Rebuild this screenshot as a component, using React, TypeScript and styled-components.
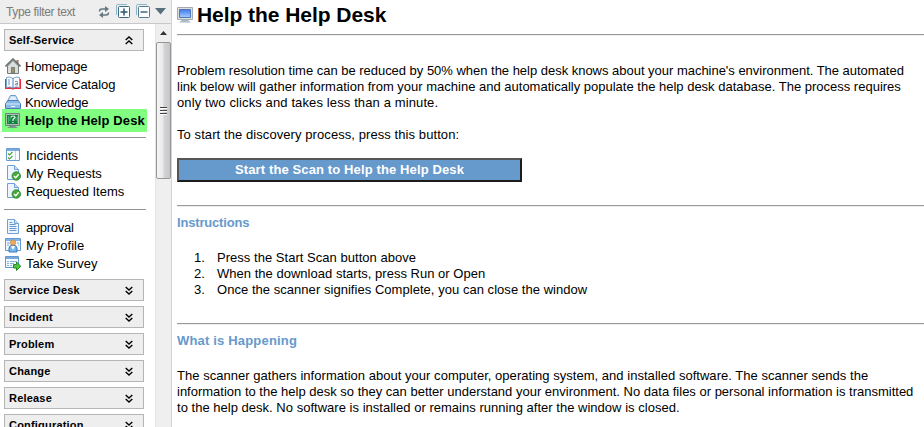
import React from "react";
import styled, { createGlobalStyle } from "styled-components";

const Global = createGlobalStyle`
  * { box-sizing: border-box; }
  body { margin: 0; background: #fff; overflow: hidden; font-family: "Liberation Sans", Arial, sans-serif; color: #000; }
  svg { display: block; flex: none; }
`;
const Page = styled.div`display: flex; width: 924px; height: 427px; overflow: hidden;`;
const Sidebar = styled.aside`display: flex; flex-direction: column; width: 172px; flex: none; border-right: 1px solid #d4d4d4;`;
const FilterBar = styled.div`
  display: flex; align-items: center; height: 24px; flex: none; padding-left: 6px;
  background: #eee; border-bottom: 1px solid #c8c8c8; color: #7b7b7b;
`;
const FilterText = styled.span`width: 92px; font-size: 12px; line-height: 24px; letter-spacing: -0.35px; white-space: nowrap;`;
const Tool = styled.span<{ $w: number }>`width: ${p => p.$w}px; height: 16px; flex: none;`;
const Scroller = styled.div`display: flex; flex: 1; min-height: 0;`;
const Nav = styled.nav`width: 155px; height: 403px; overflow: hidden; padding: 5px 0 0 4px;`;
const Section = styled.div`
  display: flex; align-items: center; justify-content: space-between;
  width: 140px; height: 22px; margin-bottom: 5px; padding: 0 10px 0 4px;
  border: 1px solid #b5b5b5; background: #eee;
  font-size: 11px; font-weight: bold; letter-spacing: 0.2px;
`;
const Group = styled.div<{ $top: number; $bottom: number }>`padding: ${p => p.$top}px 0 ${p => p.$bottom}px;`;
const Item = styled.div<{ $active?: boolean; $gap: number }>`
  display: flex; align-items: center; gap: ${p => p.$gap}px; width: 145px; white-space: nowrap;
  height: ${p => (p.$active ? 23 : 18)}px; margin: ${p => (p.$active ? "-2px 0 -3px -2px" : "0")};
  padding-left: ${p => (p.$active ? 3 : 1)}px;
  background: ${p => (p.$active ? "#80ff80" : "transparent")};
  font-size: 13px; font-weight: ${p => (p.$active ? "bold" : "normal")};
`;
const Label = styled.span<{ $ls?: number }>`padding-top: 1px; letter-spacing: ${p => p.$ls ?? 0}px; line-height: 18px; white-space: nowrap;`;
const NavRule = styled.div`width: 142px; height: 1px; background: #929292;`;
const Scrollbar = styled.div`width: 16px; height: 403px; background: #efefef; border-left: 1px solid #e4e4e4;`;
const ArrowButton = styled.div`display: flex; align-items: center; justify-content: center; height: 18px;`;
const Thumb = styled.div`
  display: flex; align-items: center; justify-content: center; width: 15px; height: 137px;
  border: 1px solid #979797; border-radius: 2px;
  background: linear-gradient(90deg, #f5f5f5, #e9e9eb 45%, #d3d3d5 55%, #c6c6c9);
`;
const Main = styled.main`flex: 1; min-width: 0; padding-left: 5px;`;
const TitleRow = styled.header`display: flex; align-items: center; gap: 4px; height: 34px; padding-bottom: 5px;`;
const Title = styled.h1`margin: 0; font-size: 21px; line-height: 24px; letter-spacing: -0.05px; white-space: nowrap;`;
const Rule = styled.div`height: 2px; border-top: 1px solid #9a9a9a; border-bottom: 1px solid #eee;`;
const Copy = styled.div<{ $top: number }>`padding-top: ${p => p.$top}px;`;
const Line = styled.div<{ $ls?: number }>`height: 16px; line-height: 16px; font-size: 13px; letter-spacing: ${p => p.$ls ?? 0}px; white-space: nowrap;`;
const ScanButton = styled.button`
  display: block; width: 345px; height: 24px; margin: 15px 0 23px; padding: 0 0 1px;
  border: 2px solid; border-color: #555 #1c1c1c #1c1c1c #555; background: #6699cc; color: #fff;
  font: bold 13px/18px "Liberation Sans", Arial, sans-serif; letter-spacing: 0.12px;
`;
const Heading = styled.h2<{ $ls: number }>`margin: 0; padding-top: 8px; height: 24px; font-size: 13px; line-height: 16px; color: #6699cc; letter-spacing: ${p => p.$ls}px;`;
const Steps = styled.ol`margin: 0; padding: 19px 0 25px 17px; list-style: none;`;
const Step = styled.li`display: flex;`;
const StepNumber = styled(Line)`width: 23px;`;

const Chevrons = ({ up }: { up?: boolean }) => (
  <svg width="8" height="9" viewBox="0 0 8 9" fill="none" stroke="#000" strokeWidth="1.4">
    <path d={up ? "M.7 4 4 1 7.300 4M.7 8 4 5 7.300 8" : "M.7 1 4 4 7.300 1M.7 5 4 8 7.300 5"} />
  </svg>
);

const Doc = () => (
  <>
    <path d="M2.5.5h7l4 4v10h-11z" fill="#edf5ff" stroke="#6fa0d8" />
    <path d="M9.5.5v4h4" fill="#c7dff7" stroke="#6fa0d8" />
  </>
);

const glyphs: Record<string, React.ReactNode> = {
  home: (
    <>
      <path d="M11.5 2h2v5l-2-2z" fill="#b26b55" />
      <path d="M2.5 8v7.5h11V8L8 2.5z" fill="#d9dedd" stroke="#747b7b" />
      <path d="M.5 8.5 8 1l7.5 7.5" fill="none" stroke="#68716f" strokeWidth="1.6" />
      <path d="M6.5 15V9.5h3V15z" fill="#9f9262" stroke="#777d76" />
    </>
  ),
  catalog: (
    <>
      <path d="M0 3h2v8h12V3h2v10H9l-1 1-1-1H0z" fill="#ee2938" />
      <path d="M1.500 1.500q3.500-1.500 6.500 1 3-2.500 6.500-1v10q-3.500-1.500-6.500.5-3-2-6.500-.5z" fill="#f7fbff" stroke="#79a5cb" />
      <path d="M8 2v11" stroke="#587fae" />
      <path d="M10 5.500q2.500-1 2.500 1V9h-2q-1-1.500 2-1.500M4 3v6" fill="none" stroke="#7792ad" />
    </>
  ),
  knowledge: (
    <>
      <path d="M2.500 7 5.500 1.500h5L13.500 7z" fill="#c9e0f4" stroke="#6c9ac6" />
      <path d="M5.500 4h5M4.500 6h7" stroke="#fff" />
      <path d="M.5 9.500 3 6.500h10l2.500 3v5H.5z" fill="#8bb9e4" stroke="#477eb9" />
      <path d="M1 10h14" stroke="#d5ebff" /><path d="M6 12.500h4" stroke="#f4faff" />
    </>
  ),
  help: (
    <>
      <path d="M.5.5h14v12H.5z" fill="#a9c4ac" stroke="#708185" />
      <path d="M2 2h11v9H2z" fill="#168044" />
      <path d="M3.500 3v7M5 4v4m6-4v4m1.500-5v7" stroke="#40b36b" />
      <path d="M6 4.500q0-1.500 2-1.500t2 1.500L8 6.500V8m0 1v1" fill="none" stroke="#e4ffe4" strokeWidth="1.2" />
      <path d="M5 13h5l3 2H2z" fill="#77978a" />
    </>
  ),
  incidents: (
    <>
      <path d="M1.5 1.500h13v12h-13z" fill="#f8fbff" stroke="#6a9cd0" />
      <path d="M2 2h12v2H2z" fill="#79aae1" />
      <path d="M10.5 4v9" stroke="#bdd4eb" />
      <path d="m3 6.500 1.500 1.500L7.500 5M3 10.500l1.500 1.500L7.500 9" fill="none" stroke="#51a540" strokeWidth="1.2" />
    </>
  ),
  request: (
    <>
      <Doc />
      <circle cx="11.3" cy="11" r="4.3" fill="#45aa37" stroke="#247a29" strokeWidth=".7" />
      <path d="m9 11 1.7 1.8 3-3.5" fill="none" stroke="#fff" strokeWidth="1.4" />
    </>
  ),
  document: <><Doc /><path d="M4.5 3.500h3m-3 2h6m-6 2h7m-7 2h7m-7 2h7" stroke="#6497d0" /></>,
  profile: (
    <>
      <path d="M.5 1.5h15v12H.5z" fill="#f1f7ff" stroke="#6499d4" />
      <path d="M1 2h14v2H1z" fill="#82b3e9" />
      <path d="M2 6h3M2 8h2m8-2h2m-1 2h1" stroke="#7aaae0" />
      <path d="M4 15v-4Q4.500 8 8 8t4 3v4z" fill="#78b5e9" stroke="#427cb8" />
      <circle cx="8" cy="5.500" r="2.7" fill="#e7ad66" stroke="#b9793c" strokeWidth=".6" />
      <path d="m6 9 2 4 2-4" fill="#fff" />
    </>
  ),
  survey: (
    <>
      <path d="M.5 1.5h13v11H.5z" fill="#f5faff" stroke="#6497ce" />
      <path d="M1 2h12v2H1z" fill="#79a9dc" />
      <path d="M2 6.5h2m1 0h7m-10 2h2m1 0h4m-7 2h2m1 0h2" stroke="#8ab1da" />
      <path d="M8.500 9.500h3V7l4.300 4.300-4.300 4.200V13h-3z" fill="#50c43c" stroke="#248b22" />
    </>
  )
};
const Glyph = ({ name }: { name: string }) => <svg width="16" height="16" viewBox="0 0 16 16">{glyphs[name]}</svg>;

type Entry = [icon: string, name: string, spacing: number];
const primary: Entry[] = [["home", "Homepage", -0.15], ["catalog", "Service Catalog", -0.1], ["knowledge", "Knowledge", -0.1]];
const requests: Entry[] = [["incidents", "Incidents", 0], ["request", "My Requests", 0], ["request", "Requested Items", 0]];
const personal: Entry[] = [["document", "approval", -0.3], ["profile", "My Profile", 0.05], ["survey", "Take Survey", 0]];
const sections = ["Service Desk", "Incident", "Problem", "Change", "Release", "Configuration"];

const Items = ({ entries, gap }: { entries: Entry[]; gap: number }) => (
  <>{entries.map(([icon, name, spacing]) => <Item key={name} $gap={gap}><Glyph name={icon} /><Label $ls={spacing}>{name}</Label></Item>)}</>
);

export default function App() {
  return (
    <Page>
      <Global />
      <Sidebar>
        <FilterBar>
          <FilterText>Type filter text</FilterText>
          <Tool $w={18}>
            <svg width="12" height="16" viewBox="0 0 12 16" fill="none" stroke="#657782" strokeWidth="1.5">
              <path d="M1.500 7.500Q1.500 5 4 5h4M10.500 8.500q0 2.500-2.500 2.500H4" /><path d="m7 2 4 3-4 3zM5 8l-4 3 4 3z" fill="#657782" stroke="none" />
            </svg>
          </Tool>
          <Tool $w={20}>
            <svg width="14" height="14" viewBox="0 0 14 14" fill="none">
              <path d="M.5 11V1.500Q.5.5 1.500.5H11" stroke="#8eb5ca" /><rect x="2.500" y="2.500" width="11" height="11" rx="1" fill="#f8fcfe" stroke="#3f687e" />
              <path d="M4.500 8h7M8 4.500v7" stroke="#31566d" strokeWidth="1.5" />
            </svg>
          </Tool>
          <Tool $w={19}>
            <svg width="14" height="14" viewBox="0 0 14 14" fill="none">
              <path d="M.5 11V1.500Q.5.5 1.500.5H11" stroke="#8eb5ca" /><rect x="2.500" y="2.500" width="11" height="11" rx="1" fill="#f8fcfe" stroke="#58798b" />
              <path d="M4.500 8h7" stroke="#49697c" strokeWidth="1.5" />
            </svg>
          </Tool>
          <svg width="11" height="7" viewBox="0 0 11 7"><path d="M0 0h11L5.500 6.500z" fill="#596f7d" /></svg>
        </FilterBar>
        <Scroller>
          <Nav>
            <Section>Self-Service<Chevrons up /></Section>
            <Group $top={1} $bottom={8}>
              <Items entries={primary} gap={4} />
              <Item $active $gap={4}><Glyph name="help" /><Label $ls={0.12}>Help the Help Desk</Label></Item>
            </Group>
            <NavRule />
            <Group $top={8} $bottom={9}><Items entries={requests} gap={5} /></Group>
            <NavRule />
            <Group $top={8} $bottom={7}><Items entries={personal} gap={5} /></Group>
            {sections.map(name => <Section key={name}>{name}<Chevrons /></Section>)}
          </Nav>
          <Scrollbar>
            <ArrowButton><svg width="7" height="4" viewBox="0 0 7 4"><path d="M0 4 3.500 0 7 4z" fill="#333" /></svg></ArrowButton>
            <Thumb><svg width="7" height="8" viewBox="0 0 7 8"><path d="M0 .5h7M0 3.500h7M0 6.500h7" stroke="#444" /><path d="M0 1.500h7M0 4.500h7M0 7.500h7" stroke="#fff" /></svg></Thumb>
          </Scrollbar>
        </Scroller>
      </Sidebar>
      <Main>
        <TitleRow>
          <svg width="16" height="16" viewBox="0 0 16 16">
            <defs><linearGradient id="screen" x2="0" y2="1"><stop stopColor="#3e78ed" /><stop offset="1" stopColor="#a7ceff" /></linearGradient></defs>
            <path d="M.5.5h15v12H.5z" fill="#dfdfdc" stroke="#a4aaaf" /><path d="M2.500 2.500h11v8h-11z" fill="url(#screen)" stroke="#5276bd" />
            <path d="M5 13h6l3 2.500H2z" fill="#a8bac3" />
          </svg>
          <Title>Help the Help Desk</Title>
        </TitleRow>
        <Rule />
        <Copy $top={27}>
          <Line $ls={-0.02}>Problem resolution time can be reduced by 50% when the help desk knows about your machine's environment. The automated</Line>
          <Line>link below will gather information from your machine and automatically populate the help desk database. The process requires</Line>
          <Line $ls={0.12}>only two clicks and takes less than a minute.</Line>
        </Copy>
        <Copy $top={16}><Line $ls={0.08}>To start the discovery process, press this button:</Line></Copy>
        <ScanButton>Start the Scan to Help the Help Desk</ScanButton>
        <Rule />
        <Heading $ls={-0.18}>Instructions</Heading>
        <Steps>
          <Step><StepNumber>1.</StepNumber><Line $ls={0.03}>Press the Start Scan button above</Line></Step>
          <Step><StepNumber>2.</StepNumber><Line $ls={0.02}>When the download starts, press Run or Open</Line></Step>
          <Step><StepNumber>3.</StepNumber><Line $ls={0.04}>Once the scanner signifies Complete, you can close the window</Line></Step>
        </Steps>
        <Rule />
        <Heading $ls={0.18}>What is Happening</Heading>
        <Copy $top={19}>
          <Line $ls={0.03}>The scanner gathers information about your computer, operating system, and installed software. The scanner sends the</Line>
          <Line>information to the help desk so they can better understand your environment. No data files or personal information is transmitted</Line>
          <Line $ls={0.02}>to the help desk. No software is installed or remains running after the window is closed.</Line>
        </Copy>
      </Main>
    </Page>
  );
}
